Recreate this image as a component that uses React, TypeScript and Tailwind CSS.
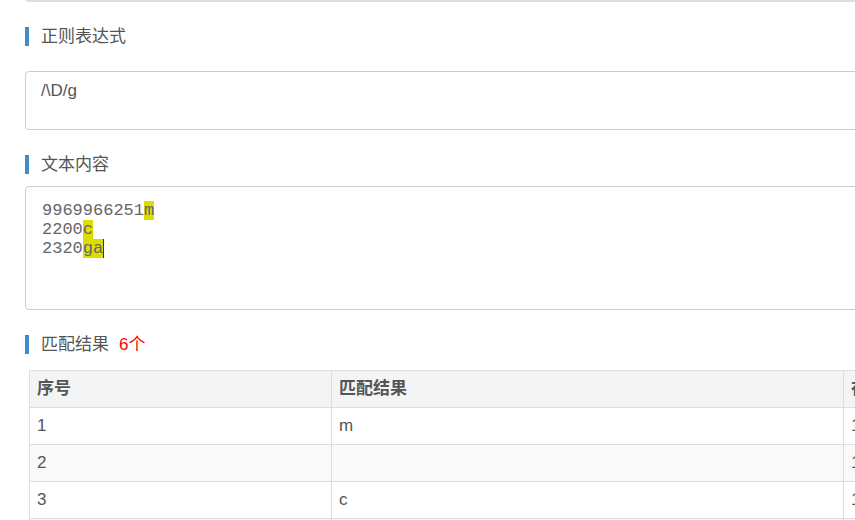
import React from "react";

const sans = { fontFamily: '"Liberation Sans", Arial, "Noto Sans CJK SC", sans-serif' };
const mono = { fontFamily: '"Liberation Mono", "Courier New", monospace' };

function Heading({ children }: { children: React.ReactNode }) {
  return (
    <div className="flex items-center h-[19px]">
      <div className="w-[4px] h-[19px] bg-[#428bca]" />
      <div className="ml-[12px] text-[17px] leading-[19px] text-[#555]">{children}</div>
    </div>
  );
}

const rows = [
  { i: "1", m: "m", p: "10" },
  { i: "2", m: "", p: "11" },
  { i: "3", m: "c", p: "16" },
  { i: "4", m: "", p: "17" },
];

export default function App() {
  return (
    <div className="w-[855px] h-[520px] overflow-hidden bg-white" style={sans}>
      <div className="w-[1300px] pl-[25px]">
        <div className="h-[12px] -mt-[10px] border-2 border-[#dddddd] rounded-[4px]" />
        <div className="mt-[25px]">
          <Heading>正则表达式</Heading>
        </div>
        <div className="mt-[25px] h-[59px] border border-[#cccccc] rounded-[4px] pt-[9px] pl-[15px] text-[17px] leading-[20px] text-[#555]">
          /\D/g
        </div>
        <div className="mt-[25px]">
          <Heading>文本内容</Heading>
        </div>
        <div
          className="mt-[12px] h-[124px] border border-[#cccccc] rounded-[4px] pt-[14px] pl-[16px] text-[17px] leading-[19px] text-[#666]"
          style={mono}
        >
          <div>
            9969966251<span className="bg-[#dddd00]">m</span>
          </div>
          <div>
            2200<span className="bg-[#dddd00]">c</span>
          </div>
          <div className="flex items-center">
            <span>2320</span>
            <span className="bg-[#dddd00]">ga</span>
            <span className="inline-block w-[1px] h-[19px] bg-[#333]" />
          </div>
        </div>
        <div className="mt-[25px] flex items-center h-[19px]">
          <div className="w-[4px] h-[19px] bg-[#428bca]" />
          <div className="ml-[12px] text-[17px] leading-[19px] text-[#555]">匹配结果</div>
          <div className="ml-[10px] text-[17px] leading-[19px] text-[#ff0000]">6个</div>
        </div>
        <div className="mt-[16px] ml-[4px] border-t border-l border-[#dddddd] text-[17px] text-[#555]">
          <div className="flex h-[37px] bg-[#f4f4f4] border-b border-[#dddddd] font-bold">
            <div className="w-[302px] border-r border-[#dddddd] flex items-center pl-[7px]">序号</div>
            <div className="w-[512px] border-r border-[#dddddd] flex items-center pl-[7px]">匹配结果</div>
            <div className="flex-1 flex items-center pl-[7px]">在原文中的位置</div>
          </div>
          {rows.map((r, idx) => (
            <div
              key={r.i}
              className={
                idx % 2 === 1
                  ? "flex h-[37px] bg-[#f9f9f9] border-b border-[#dddddd]"
                  : "flex h-[37px] bg-white border-b border-[#dddddd]"
              }
            >
              <div className="w-[302px] border-r border-[#dddddd] flex items-center pl-[7px]">{r.i}</div>
              <div className="w-[512px] border-r border-[#dddddd] flex items-center pl-[7px]">{r.m}</div>
              <div className="flex-1 flex items-center pl-[7px]">{r.p}</div>
            </div>
          ))}
        </div>
      </div>
    </div>
  );
}
